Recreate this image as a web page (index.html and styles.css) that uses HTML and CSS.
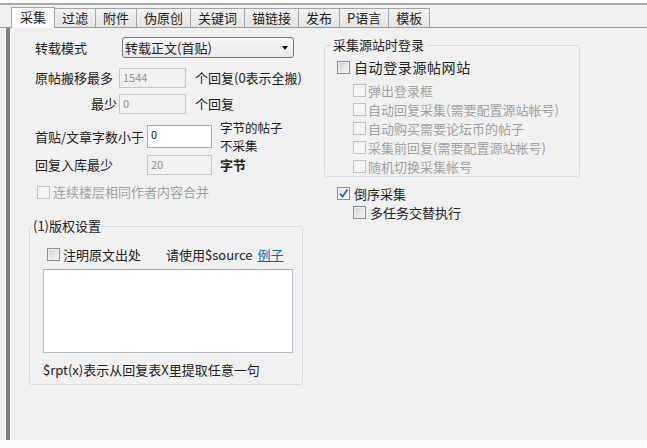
FILE: index.html
```html
<!DOCTYPE html>
<html lang="zh">
<head>
  <meta charset="UTF-8">
  <title>采集设置</title>
  <link rel="stylesheet" href="styles.css">
</head>
<body>
  <div class="window">
    <div class="tabs">
      <div class="tab active">采集</div>
      <div class="tab">过滤</div>
      <div class="tab">附件</div>
      <div class="tab">伪原创</div>
      <div class="tab">关键词</div>
      <div class="tab">锚链接</div>
      <div class="tab">发布</div>
      <div class="tab">P语言</div>
      <div class="tab">模板</div>
    </div>

    <div class="panel">
      <!-- left column -->
      <div class="col-left">
        <div class="row r1">
          <span class="lbl w87">转载模式</span>
          <div class="select">转载正文(首贴)<span class="arrow"></span></div>
        </div>
        <div class="row r2">
          <span class="lbl w84">原帖搬移最多</span>
          <div class="field off w67">1544</div>
          <span class="note">个回复(0表示全搬)</span>
        </div>
        <div class="row r3">
          <span class="lbl w84 right">最少</span>
          <div class="field off w67">0</div>
          <span class="note">个回复</span>
        </div>
        <div class="row r4">
          <span class="lbl w112">首贴/文章字数小于</span>
          <div class="field w65">0</div>
          <span class="note two">字节的帖子<br>不采集</span>
        </div>
        <div class="row r5">
          <span class="lbl w112">回复入库最少</span>
          <div class="field off w65">20</div>
          <span class="note strong">字节</span>
        </div>
        <div class="row r6">
          <span class="cb dis"></span>
          <span class="dim">连续楼层相同作者内容合并</span>
        </div>

        <fieldset class="group g-copy">
          <legend>(1)版权设置</legend>
          <div class="g-row">
            <span class="cb"></span>
            <span class="txt">注明原文出处</span>
            <span class="hint">请使用$source</span>
            <a class="link" href="#">例子</a>
          </div>
          <div class="area"></div>
          <div class="foot">$rpt(x)表示从回复表X里提取任意一句</div>
        </fieldset>
      </div>

      <!-- right column -->
      <div class="col-right">
        <fieldset class="group g-login">
          <legend>采集源站时登录</legend>
          <div class="main-opt">
            <span class="cb"></span>
            <span class="txt big">自动登录源帖网站</span>
          </div>
          <div class="subs">
            <div class="sub"><span class="cb dis"></span><span class="dim">弹出登录框</span></div>
            <div class="sub"><span class="cb dis"></span><span class="dim">自动回复采集(需要配置源站帐号)</span></div>
            <div class="sub"><span class="cb dis"></span><span class="dim">自动购买需要论坛币的帖子</span></div>
            <div class="sub"><span class="cb dis"></span><span class="dim">采集前回复(需要配置源站帐号)</span></div>
            <div class="sub"><span class="cb dis"></span><span class="dim">随机切换采集帐号</span></div>
          </div>
        </fieldset>
        <div class="opt r-rev">
          <span class="cb on">
            <svg width="11" height="11" viewBox="0 0 11 11"><path d="M2 5.5 L4.5 8.5 L9.5 1.5" fill="none" stroke="#2f5fa8" stroke-width="1.8"/></svg>
          </span>
          <span class="txt">倒序采集</span>
        </div>
        <div class="opt r-multi">
          <span class="cb"></span>
          <span class="txt">多任务交替执行</span>
        </div>
      </div>
    </div>
  </div>
</body>
</html>
```

FILE: styles.css
```css
* {
  box-sizing: border-box;
}

body {
  margin: 0;
  background: #fbfbfb;
  font-family: "Noto Sans CJK SC", "Noto Sans", sans-serif;
  font-size: 13px;
  color: #222;
}

.window {
  margin-top: 3px;
  height: 437px;
  border-top: 2px solid #a8a8a8;
  background: #f0f0f0;
  display: flex;
  flex-direction: column;
}

/* Tabs */
.tabs {
  height: 23px;
  display: flex;
  align-items: flex-end;
  padding-left: 11px;
  border-bottom: 1px solid #9c9c9c;
}

.tab {
  height: 19px;
  padding: 0 7px;
  margin-right: -1px;
  border: 1px solid #a3a3a3;
  border-bottom: none;
  background: linear-gradient(#f2f2f2, #e3e3e3);
  line-height: 17px;
  font-size: 13px;
}

.tab.active {
  height: 21px;
  margin-bottom: -1px;
  padding: 0 8px;
  background: #fafafa;
  position: relative;
  z-index: 1;
}

/* Panel */
.panel {
  flex: 1;
  margin-left: 6px;
  border-left: 4px solid #808080;
  display: flex;
  gap: 21px;
  padding: 9px 0 0 19px;
}

.col-left {
  width: 274px;
}

.col-right {
  width: 256px;
  margin-top: 1px;
}

.row {
  display: flex;
  align-items: center;
  padding-left: 6px;
  line-height: 16px;
}

.r1 { height: 21px; }
.r2 { height: 20px; margin-top: 10px; }
.r3 { height: 20px; margin-top: 6px; }
.r4 { height: 23px; margin-top: 11px; }
.r5 { height: 20px; margin-top: 7px; }
.r6 { height: 14px; margin-top: 10px; padding-left: 8px; }

.lbl { flex: none; }
.w87 { width: 87px; }
.w84 { width: 84px; }
.w112 { width: 112px; }
.right { text-align: right; padding-right: 2px; }

.select {
  width: 172px;
  height: 21px;
  display: flex;
  align-items: center;
  padding-left: 2px;
  border: 1px solid #767676;
  border-radius: 3px;
  background: linear-gradient(#f7f7f7, #e8e8e8);
}

.arrow {
  margin-left: auto;
  margin-right: 5px;
  width: 0;
  height: 0;
  border-left: 3.5px solid transparent;
  border-right: 3.5px solid transparent;
  border-top: 4px solid #111;
}

.field {
  height: 100%;
  border: 1px solid #abadb3;
  background: #ffffff;
  padding: 2px 0 0 3px;
  font-size: 11px;
  line-height: 13px;
  color: #111;
}

.field.off {
  border-color: #c6c6c6;
  background: #f0f0f0;
  color: #909090;
}

.w67 { width: 67px; }
.w65 { width: 65px; }

.note {
  margin-left: 9px;
}

.note.two {
  margin-left: 8px;
  font-size: 12.5px;
  line-height: 18px;
  padding-top: 1px;
}

.r5 .note {
  margin-left: 8px;
}

.strong {
  font-weight: bold;
}

/* Checkboxes */
.cb {
  flex: none;
  width: 13px;
  height: 13px;
  border: 1px solid #8e8f8f;
  background: linear-gradient(135deg, #cdd0d4, #f7f7f7);
  box-shadow: inset 0 0 0 1px #f2f2f2;
  display: flex;
  align-items: center;
  justify-content: center;
}

.cb.dis {
  border-color: #c3c3c3;
  background: #f4f4f4;
  box-shadow: none;
}

.cb.on {
  background: linear-gradient(135deg, #e4e7ea, #fcfcfc);
}

.dim {
  color: #a2a2a2;
  margin-left: 3px;
}

.txt {
  margin-left: 4px;
}

.big {
  font-size: 14px;
  letter-spacing: 0.6px;
}

/* Group boxes */
.group {
  margin: 0;
  padding: 0;
  border: 1px solid #d3dce2;
  border-radius: 3px;
}

.group legend {
  padding: 0 1px;
  line-height: 14px;
  font-size: 13px;
}

.g-copy {
  width: 274px;
  margin-top: 20px;
  padding-bottom: 6px;
}

.g-copy legend {
  margin-left: 2px;
}

.g-row {
  display: flex;
  align-items: center;
  height: 16px;
  margin-top: 13px;
  padding-left: 17px;
}

.g-row .txt {
  margin-left: 3px;
}

.hint {
  margin-left: 25px;
}

.link {
  margin-left: 5px;
  color: #0a66c8;
  text-decoration: underline;
}

.area {
  width: 250px;
  height: 84px;
  margin: 7px 0 0 13px;
  border: 1px solid #b8bcc4;
  border-top-color: #a9adb4;
  background: #ffffff;
}

.foot {
  margin: 9px 0 0 13px;
  line-height: 16px;
}

.g-login {
  width: 256px;
}

.g-login legend {
  margin-left: 6px;
  padding: 0 2px;
}

.main-opt {
  display: flex;
  align-items: center;
  height: 20px;
  margin-top: 5px;
  padding-left: 12px;
}

.subs {
  margin-top: 4px;
}

.sub {
  display: flex;
  align-items: center;
  height: 19px;
  padding-left: 28px;
}

.sub .dim {
  margin-left: 2px;
}

.opt {
  display: flex;
  align-items: center;
  height: 16px;
}

.r-rev {
  margin-top: 8px;
  padding-left: 13px;
}

.r-multi {
  margin-top: 3px;
  padding-left: 29px;
}
```
